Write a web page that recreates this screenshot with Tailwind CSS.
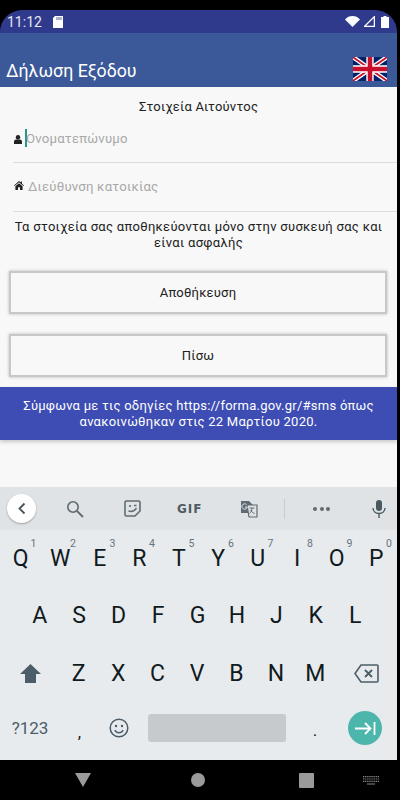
<!DOCTYPE html>
<html lang="el">
<head>
    <meta charset="UTF-8">
    <meta name="viewport" content="width=device-width, initial-scale=1.0">
    <title>Δήλωση Εξόδου</title>
    <script src="https://cdn.jsdelivr.net/npm/@tailwindcss/browser@4"></script>
</head>
<body class="bg-black h-[800px] w-[400px] overflow-hidden font-[family-name:Roboto,sans-serif]">
    <div class="mt-[10px] w-[397px] h-[790px] rounded-[22px] overflow-hidden flex flex-col">
        <!-- status bar -->
        <div class="h-[23px] bg-[#303a8c] flex items-center justify-between pl-[7px] pr-[8px] text-white shrink-0">
            <div class="flex items-center">
                <span class="text-[14px] leading-none text-[#e6e8f4]">11:12</span>
                <svg class="ml-[11px]" width="10" height="12" viewBox="0 0 10 12"><path d="M2 0h8v12H0V2z" fill="#fff"/><path d="M4 1v3M6 1v3M8 1v3" stroke="#303a8c" stroke-width=".8"/></svg>
            </div>
            <div class="flex items-center gap-[4px]">
                <svg width="15" height="11" viewBox="0 0 15 11"><path d="M0 3.4C2 1.2 4.6 0 7.5 0S13 1.2 15 3.4L7.5 11z" fill="#fff"/></svg>
                <svg width="11" height="11" viewBox="0 0 12 12"><path d="M11.3 .7v10.600H.7z" fill="none" stroke="#fff" stroke-width="1.400"/></svg>
                <svg class="ml-[2px]" width="8" height="12" viewBox="0 0 8 12"><path d="M2.500 0h3v1H8v11H0V1h2.500z" fill="#fff"/></svg>
            </div>
        </div>
        <!-- app bar -->
        <div class="h-[54px] bg-[#3b5998] flex items-end justify-between pl-[6px] pr-[10px] pb-[6px] shrink-0">
            <h1 class="text-[17.8px] leading-[24px] text-white -mb-[2px]">Δήλωση Εξόδου</h1>
            <svg width="34" height="24" viewBox="0 0 60 42">
                <rect width="60" height="42" fill="#012169"/>
                <path d="M0 0L60 42M60 0L0 42" stroke="#fff" stroke-width="8"/>
                <path d="M0 0L60 42M60 0L0 42" stroke="#c8102e" stroke-width="3"/>
                <path d="M30 0V42M0 21H60" stroke="#fff" stroke-width="13"/>
                <path d="M30 0V42M0 21H60" stroke="#c8102e" stroke-width="8"/>
            </svg>
        </div>
        <!-- form -->
        <div class="h-[400px] bg-[#f8f8f8] shrink-0">
            <p class="text-center text-[13px] leading-[17px] text-[#212121] pt-[11px] tracking-[0.2px]">Στοιχεία Αιτούντος</p>
            <div class="ml-[13px] h-[48px] border-b border-[#dcdcdc] flex items-start pt-[15px]">
                <svg class="mt-[5px] ml-[1px]" width="8" height="9" viewBox="0 0 8 9"><circle cx="4" cy="2.300" r="2.200" fill="#222"/><path d="M0 9V6.600C0 5.300 1 4.600 2 4.600h4c1 0 2 .7 2 2V9z" fill="#222"/></svg>
                <div class="w-[2px] h-[18px] bg-[#26968a] ml-[3px] -mt-[1px]"></div>
                <span class="text-[13.2px] leading-[18px] text-[#a8a8a8] tracking-[0.2px] -ml-[1px]">Ονοματεπώνυμο</span>
            </div>
            <div class="ml-[13px] h-[49px] border-b border-[#dcdcdc] flex items-start pt-[15px]">
                <svg class="mt-[3px] ml-[1px]" width="10" height="9" viewBox="0 0 10 9"><path d="M5 0L0 4.400l.6.7L5 1.300l4.400 3.800.6-.7L8 2.700V.5H6.800v1.100z" fill="#222"/><path d="M5 2.200L1.400 5.300V9h2.600V6.200h2V9h2.600V5.300z" fill="#222"/></svg>
                <span class="text-[13.2px] leading-[18px] text-[#a8a8a8] tracking-[0.2px] ml-[4px]">Διεύθυνση κατοικίας</span>
            </div>
            <p class="text-center text-[13px] leading-[16px] text-[#212121] mt-[7px] tracking-[0.3px]">Τα στοιχεία σας αποθηκεύονται μόνο στην συσκευή σας και<br>είναι ασφαλής</p>
            <button class="block ml-[9px] mt-[20px] w-[378px] h-[43px] bg-[#f8f8f8] border-2 border-[#c8c8c8] shadow-[0_0_3px_rgba(0,0,0,0.25)] text-[13px] text-[#212121] tracking-[0.2px]">Αποθήκευση</button>
            <button class="block ml-[9px] mt-[20px] w-[378px] h-[43px] bg-[#f8f8f8] border-2 border-[#c8c8c8] shadow-[0_0_3px_rgba(0,0,0,0.25)] text-[13px] text-[#212121] tracking-[0.2px]">Πίσω</button>
            <div class="mt-[10px] h-[53px] bg-[#3d4db3] shadow-[0_2px_4px_rgba(0,0,0,0.2)] flex items-center justify-center text-center text-[13px] leading-[16px] text-white tracking-[0.25px]">
                <p>Σύμφωνα με τις οδηγίες https://forma.gov.gr/#sms όπως<br>ανακοινώθηκαν στις 22 Μαρτίου 2020.</p>
            </div>
        </div>
        <!-- keyboard toolbar -->
        <div class="h-[43px] bg-[#e0e3e6] relative flex items-center shrink-0">
            <div class="ml-[7px] w-[29px] h-[29px] rounded-full bg-white shadow-[0_1px_2px_rgba(0,0,0,0.3)] flex items-center justify-center">
                <svg width="8" height="13" viewBox="0 0 8 13"><path d="M6.500 1.500L1.500 6.500l5 5" fill="none" stroke="#4a5458" stroke-width="1.800"/></svg>
            </div>
            <svg class="ml-[30px]" width="18" height="18" viewBox="0 0 18 18"><circle cx="7" cy="7" r="5.200" fill="none" stroke="#5f6b72" stroke-width="1.600"/><path d="M11 11l6 6" stroke="#5f6b72" stroke-width="1.800"/></svg>
            <svg class="ml-[40px]" width="17" height="17" viewBox="0 0 17 17"><path d="M2.500 1h12A1.500 1.500 0 0 1 16 2.500V11l-5 5H2.500A1.500 1.500 0 0 1 1 14.500v-12A1.500 1.500 0 0 1 2.500 1z" fill="none" stroke="#5f6b72" stroke-width="1.600"/><circle cx="6" cy="6" r="1.100" fill="#5f6b72"/><path d="M10 5.500h2.500M4.500 11c3 1 6 0 8-3" fill="none" stroke="#5f6b72" stroke-width="1.400"/></svg>
            <span class="ml-[36px] w-[26px] text-[12px] leading-none font-extrabold text-[#505c63] tracking-[1px] font-[family-name:'DejaVu_Sans',sans-serif]">GIF</span>
            <svg class="ml-[37px]" width="18" height="18" viewBox="0 0 18 18"><path d="M1 1h8l4 4v8H1z" fill="#5f6b72"/><path d="M7 5h10v12H9z" fill="#e0e3e6" stroke="#5f6b72" stroke-width="1.200"/><path d="M9.500 8h5M12 8c0 2.500-1.200 4.500-2.500 5.500M10.500 10c.8 1.500 2.500 3 4 3.500" fill="none" stroke="#5f6b72" stroke-width="1"/><path d="M6.500 4.500a2.700 2.700 0 1 0 .8 2.500H5" fill="none" stroke="#e0e3e6" stroke-width="1"/></svg>
            <div class="ml-[26px] w-px h-[20px] bg-[#c8cccf]"></div>
            <div class="ml-[28px] flex gap-[2.500px]">
                <div class="w-[4px] h-[4px] rounded-full bg-[#5f6b72]"></div>
                <div class="w-[4px] h-[4px] rounded-full bg-[#5f6b72]"></div>
                <div class="w-[4px] h-[4px] rounded-full bg-[#5f6b72]"></div>
            </div>
            <svg class="ml-[42px]" width="14" height="18" viewBox="0 0 14 18"><rect x="4" y="0" width="6" height="11" rx="3" fill="#4a5961"/><path d="M1 8c0 3.300 2.700 5.500 6 5.500s6-2.200 6-5.500M7 13.500V18" fill="none" stroke="#4a5961" stroke-width="1.400"/></svg>
        </div>
        <!-- keyboard -->
        <div class="h-[230px] bg-[#e8ebee] text-[#101a20] text-[23px] leading-none shrink-0">
            <div class="h-[57px] grid grid-cols-10 px-px pt-[17px]">
                <div class="relative text-center">Q<sup class="absolute right-[4px] -top-[3px] text-[10.500px] text-[#66727a]">1</sup></div>
                <div class="relative text-center">W<sup class="absolute right-[4px] -top-[3px] text-[10.500px] text-[#66727a]">2</sup></div>
                <div class="relative text-center">E<sup class="absolute right-[4px] -top-[3px] text-[10.500px] text-[#66727a]">3</sup></div>
                <div class="relative text-center">R<sup class="absolute right-[4px] -top-[3px] text-[10.500px] text-[#66727a]">4</sup></div>
                <div class="relative text-center">T<sup class="absolute right-[4px] -top-[3px] text-[10.500px] text-[#66727a]">5</sup></div>
                <div class="relative text-center">Y<sup class="absolute right-[4px] -top-[3px] text-[10.500px] text-[#66727a]">6</sup></div>
                <div class="relative text-center">U<sup class="absolute right-[4px] -top-[3px] text-[10.500px] text-[#66727a]">7</sup></div>
                <div class="relative text-center">I<sup class="absolute right-[4px] -top-[3px] text-[10.500px] text-[#66727a]">8</sup></div>
                <div class="relative text-center">O<sup class="absolute right-[4px] -top-[3px] text-[10.500px] text-[#66727a]">9</sup></div>
                <div class="relative text-center">P<sup class="absolute right-[4px] -top-[3px] text-[10.500px] text-[#66727a]">0</sup></div>
            </div>
            <div class="h-[57px] grid grid-cols-9 pl-[20px] pr-[22px] pt-[17px] text-center">
                <div>A</div><div>S</div><div>D</div><div>F</div><div>G</div><div>H</div><div>J</div><div>K</div><div>L</div>
            </div>
            <div class="h-[56px] flex items-center pt-[2px]">
                <div class="w-[60px] flex justify-center">
                    <svg width="21" height="19" viewBox="0 0 21 19"><path d="M10.500 0L21 10h-5v9H5v-9H0z" fill="#4a5d68"/></svg>
                </div>
                <div class="w-[276px] grid grid-cols-7 text-center -ml-[1px]">
                    <div>Z</div><div>X</div><div>C</div><div>V</div><div>B</div><div>N</div><div>M</div>
                </div>
                <div class="flex-1 flex justify-center">
                    <svg width="25" height="19" viewBox="0 0 25 19"><path d="M7 1h16a1 1 0 0 1 1 1v15a1 1 0 0 1-1 1H7L1 9.500z" fill="none" stroke="#4a5d68" stroke-width="1.600"/><path d="M11 6l7 7M18 6l-7 7" stroke="#4a5d68" stroke-width="1.800"/></svg>
                </div>
            </div>
            <div class="h-[60px] pb-[4px] flex items-center text-[#4a5d68]">
                <div class="w-[60px] text-center text-[17px]">?123</div>
                <div class="w-[39px] text-center text-[17px] text-[#101a20] mt-[8px]">,</div>
                <div class="w-[39px] flex justify-center">
                    <svg width="20" height="20" viewBox="0 0 20 20"><circle cx="10" cy="10" r="8.800" fill="none" stroke="#4a5d68" stroke-width="1.500"/><circle cx="7" cy="8" r="1.200" fill="#4a5d68"/><circle cx="13" cy="8" r="1.200" fill="#4a5d68"/><path d="M5.800 12.200c1 1.800 2.500 2.600 4.200 2.600s3.200-.8 4.200-2.600" fill="none" stroke="#4a5d68" stroke-width="1.500"/></svg>
                </div>
                <div class="ml-[10px] w-[138px] h-[28px] rounded-[3px] bg-[#c6cacd]"></div>
                <div class="w-[40px] ml-[9px] text-center text-[17px] text-[#101a20] mt-[4px]">.</div>
                <div class="ml-[13px] w-[34px] h-[34px] rounded-full bg-[#4db6ac] flex items-center justify-center">
                    <svg width="21" height="13" viewBox="0 0 21 13"><path d="M0 6.500h15M10 1l5.500 5.500L10 12M19.500 0v13" fill="none" stroke="#fff" stroke-width="1.800"/></svg>
                </div>
            </div>
        </div>
        <!-- nav bar -->
        <div class="flex-1 bg-black relative flex items-center">
            <svg class="ml-[75px]" width="16" height="14" viewBox="0 0 16 14"><path d="M0 0h16L8 14z" fill="#9a9a9a"/></svg>
            <div class="ml-[100px] w-[14px] h-[14px] rounded-full bg-[#9a9a9a]"></div>
            <div class="ml-[94px] w-[15px] h-[15px] rounded-[1px] bg-[#9a9a9a]"></div>
            <svg class="ml-[49px]" width="16" height="9" viewBox="0 0 16 9"><path d="M0 .7h16M0 3h16M0 5.300h16" stroke="#8a8a8a" stroke-width="1.200" stroke-dasharray="1.300 .8"/><path d="M4 8h8" stroke="#8a8a8a"/></svg>
        </div>
    </div>
</body>
</html>
